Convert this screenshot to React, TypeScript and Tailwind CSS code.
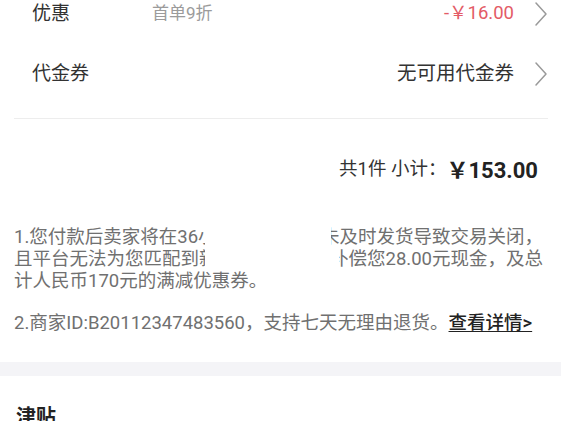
const Chevron = () => (
  <svg width="14" height="26" viewBox="0 0 14 26" fill="none" className="shrink-0">
    <path d="M2 2 L12 13 L2 24" stroke="#9a9a9a" strokeWidth="1.5" strokeLinecap="round" strokeLinejoin="round" />
  </svg>
)

const App = () => {
  return (
    <div className="w-[561px] h-[421px] overflow-hidden bg-white font-['Roboto','Noto_Sans_CJK_SC',sans-serif] text-[#333]">
      <div className="-mt-[16px]">
        <div className="h-[60px] flex items-center pl-[32px] pr-[13px]">
          <span className="text-[19px] w-[120px]">优惠</span>
          <span className="text-[17px] text-[#9b9b9b]">首单9折</span>
          <span className="ml-auto text-[18.5px] text-[#e35b66] mr-[20px]">-￥16.00</span>
          <Chevron />
        </div>
        <div className="h-[60px] flex items-center pl-[32px] pr-[13px]">
          <span className="text-[19px]">代金券</span>
          <span className="ml-auto text-[19.5px] text-[#333] mr-[20px]">无可用代金券</span>
          <Chevron />
        </div>
      </div>

      <div className="mt-[14px] ml-[14px] mr-[13px] h-px bg-[#ededed]" />

      <div className="mt-[36px] h-[30px] flex items-center justify-end pr-[23px]">
        <span className="text-[18.5px] text-[#333]">共1件 小计：</span>
        <span className="text-[22px] font-bold text-[#222]">￥153.00</span>
      </div>

      {/* notes, the middle of the first two lines is blanked out in the shot */}
      <div className="relative mt-[41px] pl-[14px] pr-[18px] text-[18.5px] leading-[22px] text-[#707070] whitespace-nowrap">
        <div className="flex justify-between">
          <span>1.您付款后卖家将在36小</span>
          <span>未及时发货导致交易关闭，</span>
        </div>
        <div className="flex justify-between">
          <span>且平台无法为您匹配到新</span>
          <span>补偿您28.00元现金，及总</span>
        </div>
        <div>计人民币170元的满减优惠券。</div>
        <div className="absolute left-[205px] top-[-4px] w-[126px] h-[26px] bg-white" />
        <div className="absolute left-[205px] top-[22px] w-[134px] h-[21px] bg-white" />
      </div>

      <div className="mt-[21px] px-[14px] h-[22px] flex items-center text-[18.5px] text-[#707070] whitespace-nowrap">
        <span>2.商家ID:B20112347483560，支持七天无理由退货。</span>
        <span className="text-[#222] font-medium underline underline-offset-2">查看详情&gt;</span>
      </div>

      <div className="mt-[27px] h-[14px] bg-[#f4f4f7]" />

      <div className="pt-[27px] pl-[16px]">
        <span className="text-[20px] font-bold text-[#222] leading-[28px]">津贴</span>
      </div>
    </div>
  )
}

export default App
